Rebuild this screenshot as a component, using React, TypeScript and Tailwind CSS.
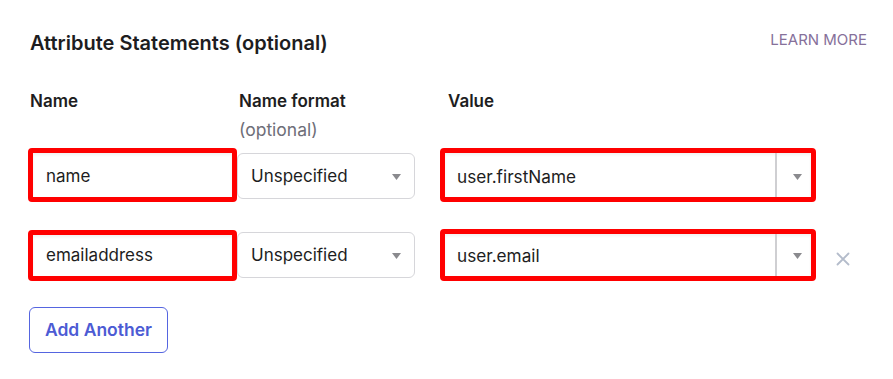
import React from "react";

function Caret() {
  return (
    <svg width="9" height="6" viewBox="0 0 9 6" className="shrink-0">
      <path d="M0 0 L9 0 L4.5 6 Z" fill="#8a8a8e" />
    </svg>
  );
}

function FormatSelect({ pt }: { pt: string }) {
  return (
    <div className={`w-[178px] h-[46px] border border-[#d6d6da] rounded-[6px] bg-white flex items-center justify-between pl-[13px] pr-[13px] ${pt}`}>
      <span className="text-[17px] text-[#1d1d21]">Unspecified</span>
      <Caret />
    </div>
  );
}

function NameInput({ value, h, pt }: { value: string; h: string; pt: string }) {
  return (
    <div className={`w-[209px] ${h} border-[5px] border-[#ff0000] rounded-[4px] bg-white flex items-center pl-[13px] shadow-[inset_0_2px_3px_rgba(0,0,0,0.06)] ${pt}`}>
      <span className="text-[17px] text-[#1d1d21]">{value}</span>
    </div>
  );
}

function ValueSelect({ value, h, pt }: { value: string; h: string; pt: string }) {
  return (
    <div className={`w-[376px] ${h} border-[5px] border-[#ff0000] rounded-[4px] bg-white flex items-stretch shadow-[inset_0_2px_3px_rgba(0,0,0,0.06)]`}>
      <div className={`flex-1 flex items-center pl-[12px] ${pt}`}>
        <span className="text-[17.2px] text-[#1d1d21]">{value}</span>
      </div>
      <div className="w-[2px] bg-[#cfcfd2]" />
      <div className={`w-[34px] flex items-center justify-end pr-[9px] ${pt}`}>
        <Caret />
      </div>
    </div>
  );
}

export default function App() {
  return (
    <div
      className="w-[893px] h-[379px] bg-white pl-[28px] pr-[26px] pt-[31px]"
      style={{ fontFamily: "Inter, 'Noto Sans', sans-serif" }}
    >
      <div className="flex justify-between items-start h-[24px] pl-[2px]">
        <h2 className="text-[20px] leading-[24px] font-semibold text-[#1d1d21]">
          Attribute Statements (optional)
        </h2>
        <a className="text-[15px] leading-[18px] text-[#86709a]">LEARN MORE</a>
      </div>

      <div className="flex mt-[36px]">
        <div className="w-[209px] pl-[2px] text-[17px] leading-[20px] font-semibold text-[#1d1d21]">Name</div>
        <div className="w-[178px] pl-[2px]">
          <div className="text-[17px] leading-[20px] font-semibold text-[#1d1d21]">Name format</div>
          <div className="text-[17.5px] leading-[20px] mt-[9px] text-[#6e6e78]">(optional)</div>
        </div>
        <div className="w-[25px]" />
        <div className="pl-[8px] text-[17px] leading-[20px] font-semibold text-[#1d1d21]">Value</div>
      </div>

      <div className="flex items-center mt-[8px] h-[54px]">
        <NameInput value="name" h="h-[54px]" pt="pt-[3px]" />
        <div className="pt-[2px]">
          <FormatSelect pt="pt-[2px]" />
        </div>
        <div className="w-[25px]" />
        <ValueSelect value="user.firstName" h="h-[54px]" pt="pt-[3px]" />
      </div>

      <div className="flex items-center mt-[27px] h-[52px]">
        <NameInput value="emailaddress" h="h-[51px]" pt="pt-[1px]" />
        <FormatSelect pt="pt-[1px]" />
        <div className="w-[25px]" />
        <ValueSelect value="user.email" h="h-[52px]" pt="pt-[1px]" />
        <div className="ml-[20px] w-[14px] h-[14px] flex items-center justify-center mt-[8px]">
          <svg width="14" height="14" viewBox="0 0 14 14">
            <path d="M1.5 1.5 L12.5 12.5 M12.5 1.5 L1.5 12.5" stroke="#b4bccb" strokeWidth="1.8" strokeLinecap="round" />
          </svg>
        </div>
      </div>

      <button className="mt-[26px] ml-[1px] w-[139px] h-[46px] border border-[#5565e0] rounded-[6px] text-[17.5px] font-semibold text-[#4c5bd4] bg-white">
        Add Another
      </button>
    </div>
  );
}
